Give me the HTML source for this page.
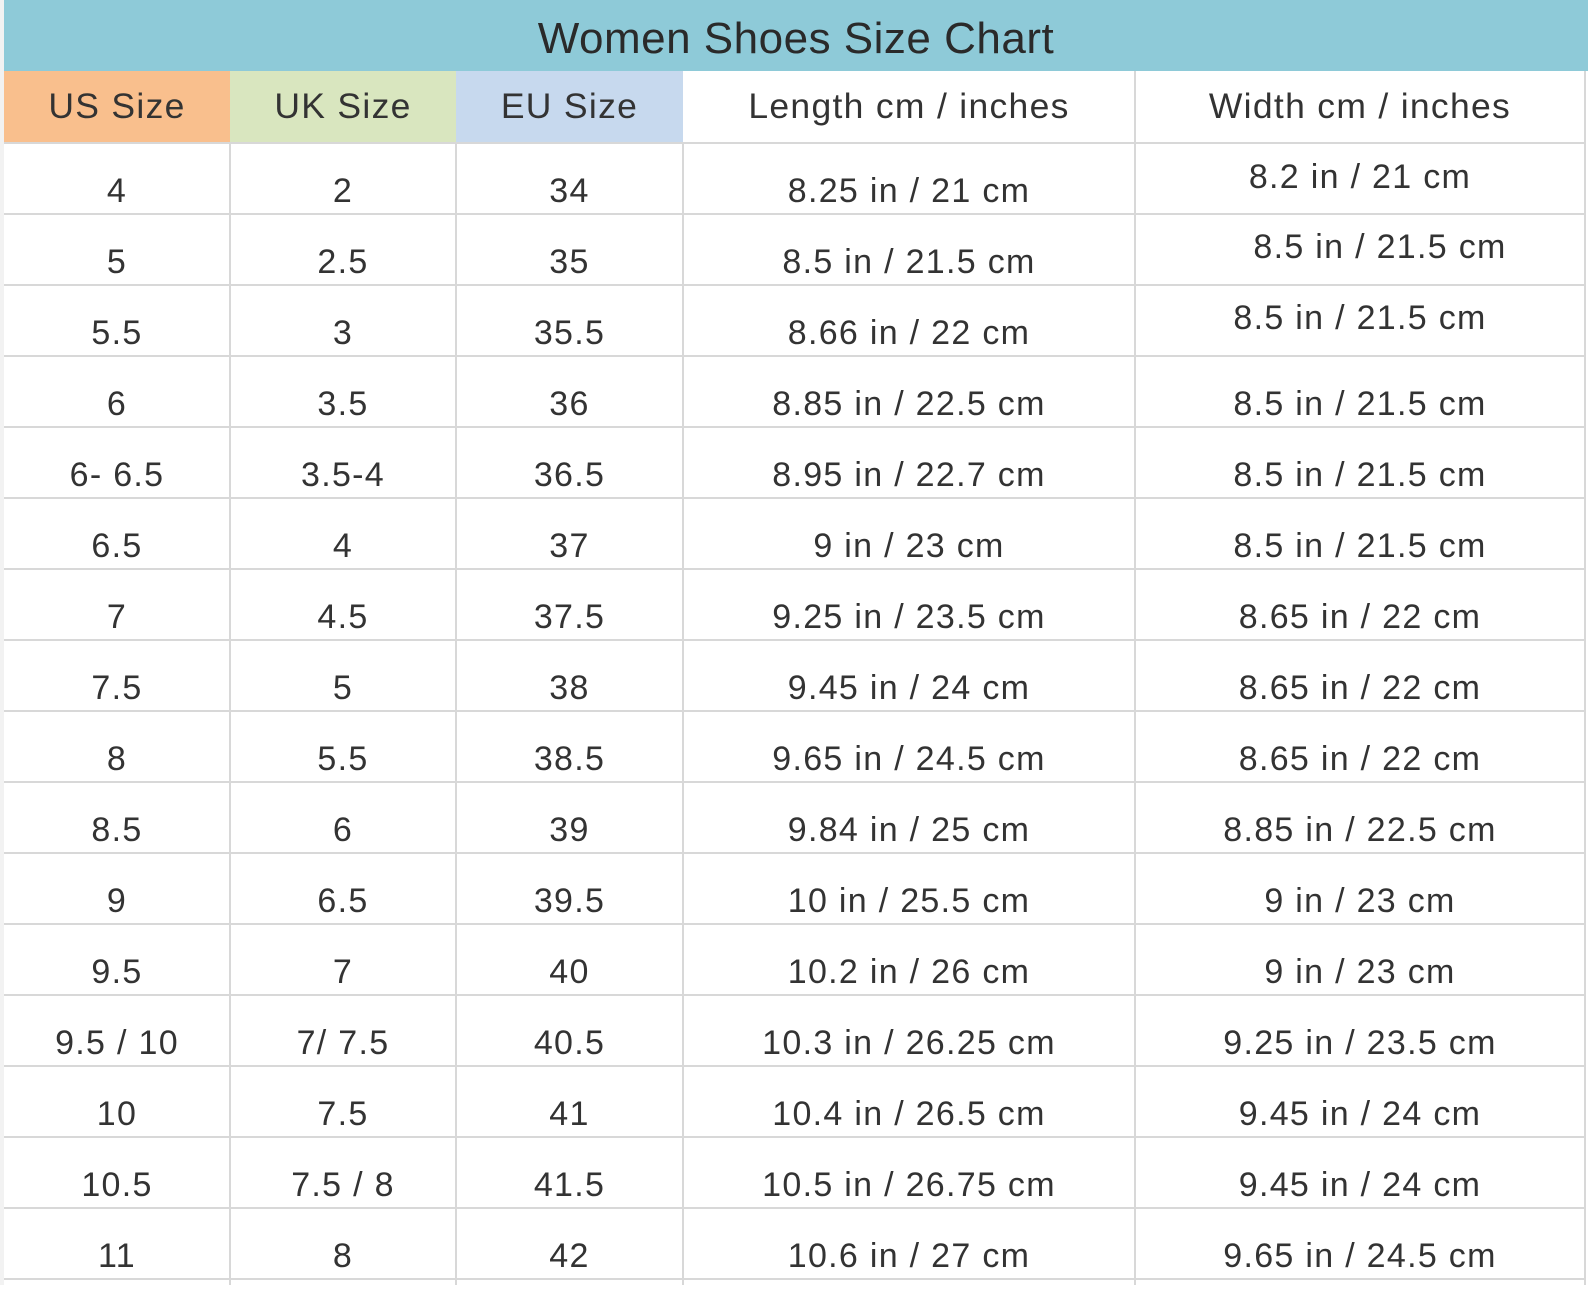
<!DOCTYPE html>
<html><head><meta charset="utf-8"><style>
html,body{margin:0;padding:0;background:#fff;}
body{width:1588px;height:1285px;overflow:hidden;position:relative;font-family:"Liberation Sans",sans-serif;color:#333;}
.title{position:absolute;left:4px;top:0;width:1584px;height:71px;background:#8ecad8;text-align:center;font-size:44px;letter-spacing:0.5px;line-height:78px;color:#2a2a2a;}
.leftedge{position:absolute;left:0;top:0;width:4px;height:1285px;background:#f2f2f2;}
.c{position:absolute;box-sizing:border-box;text-align:center;font-size:34px;letter-spacing:1.3px;white-space:nowrap;}
.hl{position:absolute;height:2px;background:#d8d8d8;left:4px;width:1581px;}
.vl{position:absolute;width:2px;background:#d8d8d8;top:71px;height:1214px;}
</style></head><body>
<div class="leftedge"></div>
<div class="title">Women Shoes Size Chart</div>
<div id="t"></div>
<script>
var X=[4,230,456,683,1135,1585];
var rows=[
["4","2","34","8.25 in / 21 cm","8.2 in / 21 cm",-14,0],
["5","2.5","35","8.5 in / 21.5 cm","8.5 in / 21.5 cm",-15,20],
["5.5","3","35.5","8.66 in / 22 cm","8.5 in / 21.5 cm",-15,0],
["6","3.5","36","8.85 in / 22.5 cm","8.5 in / 21.5 cm",0,0],
["6- 6.5","3.5-4","36.5","8.95 in / 22.7 cm","8.5 in / 21.5 cm",0,0],
["6.5","4","37","9 in / 23 cm","8.5 in / 21.5 cm",0,0],
["7","4.5","37.5","9.25 in / 23.5 cm","8.65 in / 22 cm",0,0],
["7.5","5","38","9.45 in / 24 cm","8.65 in / 22 cm",0,0],
["8","5.5","38.5","9.65 in / 24.5 cm","8.65 in / 22 cm",0,0],
["8.5","6","39","9.84 in / 25 cm","8.85 in / 22.5 cm",0,0],
["9","6.5","39.5","10 in / 25.5 cm","9 in / 23 cm",0,0],
["9.5","7","40","10.2 in / 26 cm","9 in / 23 cm",0,0],
["9.5 / 10","7/ 7.5","40.5","10.3 in / 26.25 cm","9.25 in / 23.5 cm",0,0],
["10","7.5","41","10.4 in / 26.5 cm","9.45 in / 24 cm",0,0],
["10.5","7.5 / 8","41.5","10.5 in / 26.75 cm","9.45 in / 24 cm",0,0],
["11","8","42","10.6 in / 27 cm","9.65 in / 24.5 cm",0,0]];
var h='';
var hd=["US Size","UK Size","EU Size","Length cm / inches","Width cm / inches"];
var bg=["#f9bf8d","#d9e6bf","#c7d9ee","#fff","#fff"];
for(var j=0;j<5;j++){h+='<div class="c" style="font-size:35.5px;left:'+X[j]+'px;width:'+(X[j+1]-X[j])+'px;top:71px;height:72px;line-height:70px;background:'+bg[j]+'">'+hd[j]+'</div>';}
for(var i=0;i<16;i++){var y=143+i*71;
 for(var j=0;j<5;j++){var dy=13,dx=0;if(j==4){dy+=rows[i][5];dx=rows[i][6];}
  h+='<div class="c" style="left:'+(X[j]+dx)+'px;width:'+(X[j+1]-X[j])+'px;top:'+(y+dy)+'px;height:71px;line-height:71px">'+rows[i][j]+'</div>';}
 h+='<div class="hl" style="top:'+(y-1)+'px"></div>';}
h+='<div class="hl" style="top:1278px"></div>';
for(var j=1;j<6;j++){h+='<div class="vl" style="left:'+(X[j]-1)+'px;top:'+(j<4?143:71)+'px;height:'+(j<4?1142:1214)+'px"></div>';}
document.getElementById('t').innerHTML=h;
</script>
</body></html>
